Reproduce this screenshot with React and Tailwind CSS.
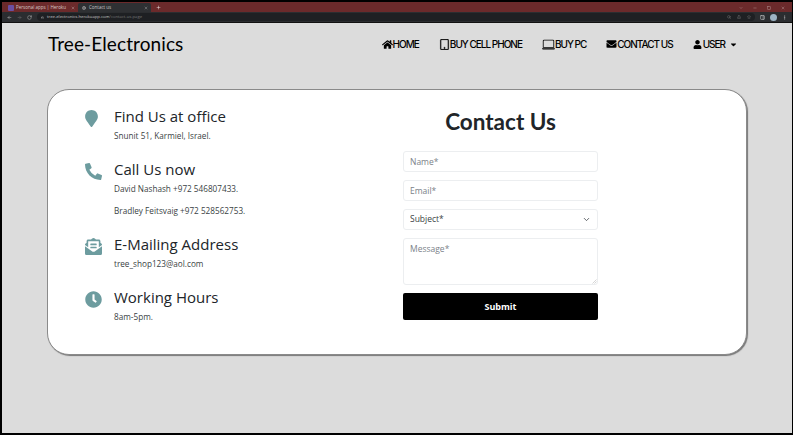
import { FaHome, FaMapMarker, FaPhoneAlt, FaEnvelopeOpenText, FaClock, FaEnvelope, FaUser, FaCaretDown } from 'react-icons/fa'
import { BsTablet, BsLaptop } from 'react-icons/bs'
import { ChevronDown, X, Plus, ArrowLeft, ArrowRight, RotateCw, Lock, Search, Share, Star, Minus, Square, PanelRight, MoreVertical, Globe } from 'lucide-react'

const navItems = [
  { label: 'HOME', icon: <FaHome className="w-[11px] h-[11px]" /> },
  { label: 'BUY CELL PHONE', icon: <BsTablet className="w-[11px] h-[11px] stroke-[0.6px]" /> },
  { label: 'BUY PC', icon: <BsLaptop className="w-[13px] h-[13px]" /> },
  { label: 'CONTACT US', icon: <FaEnvelope className="w-[11px] h-[10px]" /> },
]

const infoBlocks = [
  { title: 'Find Us at office', lines: ['Snunit 51, Karmiel, Israel.'], icon: <FaMapMarker className="w-[17px] h-[17px] -ml-[2px]" /> },
  { title: 'Call Us now', lines: ['David Nashash +972 546807433.', 'Bradley Feitsvaig +972 528562753.'], icon: <FaPhoneAlt className="w-[17px] h-[17px]" /> },
  { title: 'E-Mailing Address', lines: ['tree_shop123@aol.com'], icon: <FaEnvelopeOpenText className="w-[17px] h-[17px]" /> },
  { title: 'Working Hours', lines: ['8am-5pm.'], icon: <FaClock className="w-[17px] h-[17px]" /> },
]

function BrowserChrome() {
  return (
    <>
      {/* Tab strip */}
      <div className="h-[10px] bg-[#6b2a2b] flex items-end pl-[4px] text-[4.5px] leading-none whitespace-nowrap shrink-0">
        <div className="w-[72px] h-[9px] flex items-center gap-[2px] pl-[2px] text-[#d8c8c8]">
          <span className="w-[6px] h-[6px] bg-[#6a4fa3] rounded-[1px]" />
          <span className="flex-1">Personal apps | Heroku</span>
          <X className="w-[4px] h-[4px] mr-[3px]" />
        </div>
        <div className="w-[73px] h-[9px] flex items-center gap-[3px] pl-[4px] bg-[#2e3033] rounded-t-[2px] text-[#c8c8c8]">
          <Globe className="w-[4px] h-[4px]" />
          <span className="flex-1">Contact us</span>
          <X className="w-[4px] h-[4px] mr-[3px]" />
        </div>
        <Plus className="w-[5px] h-[5px] ml-[5px] mb-[2px] text-white" />
        <div className="ml-auto flex items-center gap-[10px] pr-[7px] mb-[2px] text-[#d0b8b8]">
          <ChevronDown className="w-[4px] h-[4px]" />
          <Minus className="w-[4px] h-[4px]" />
          <Square className="w-[4px] h-[4px]" />
          <X className="w-[4px] h-[4px]" />
        </div>
      </div>
      {/* Address bar */}
      <div className="h-[11px] bg-[#2b2d30] flex items-center pl-[5px] pr-[5px] gap-[5px] text-[#c8c8c8] border-b border-[#111] shrink-0">
        <ArrowLeft className="w-[5px] h-[5px]" />
        <ArrowRight className="w-[5px] h-[5px] text-[#777]" />
        <RotateCw className="w-[5px] h-[5px]" />
        <div className="flex-1 h-[8px] bg-[#1e2023] rounded-full flex items-center gap-[3px] pl-[4px] pr-[4px] text-[4.2px] leading-none">
          <Lock className="w-[3px] h-[3px]" />
          <span>tree-electronics.herokuapp.com<span className="text-[#777]">/contact-us-page</span></span>
          <div className="ml-auto flex items-center gap-[6px] text-[#999]">
            <Search className="w-[4px] h-[4px]" />
            <Share className="w-[4px] h-[4px]" />
            <Star className="w-[4px] h-[4px]" />
          </div>
        </div>
        <PanelRight className="w-[5px] h-[5px] text-white" />
        <span className="w-[7px] h-[7px] rounded-full bg-[#9db4c4]" />
        <MoreVertical className="w-[5px] h-[5px]" />
      </div>
    </>
  )
}

function InfoBlock({ block }) {
  return (
    <div className="flex">
      <div className="w-[29px] text-[#6d9c9f] pt-[5px] shrink-0 -ml-[1px]">{block.icon}</div>
      <div>
        <h3 className="text-[15px] leading-[22px] font-normal text-[#212529]">{block.title}</h3>
        <div className="mt-[2px] flex flex-col gap-[7.5px]">
          {block.lines.map((line) => (
            <p key={line} className="text-[8.2px] leading-[14px] text-[#3a3f44]">{line}</p>
          ))}
        </div>
      </div>
    </div>
  )
}

export default function App() {
  const field = 'block w-full h-[21px] px-[6px] bg-white border border-[#eceef0] rounded-[3px] text-[8.5px] text-[#3a3f44] placeholder:text-[#7b8288] outline-none'

  return (
    <div className="w-[793px] h-[435px] flex flex-col overflow-hidden bg-[#dcdcdc] border-2 border-black border-r-[1px] font-['Open_Sans',sans-serif]">
      <BrowserChrome />

      {/* Navbar */}
      <header className="flex items-center justify-between pl-[46px] pr-[54px] h-[42px] shrink-0">
        <span className="text-[19px] text-black font-['Lato',sans-serif] tracking-[0.1px]">Tree-Electronics</span>
        <nav className="flex items-center gap-[20px] text-[10px] font-medium text-black tracking-[-1px] font-['Inter',sans-serif]">
          {navItems.map((item) => (
            <a key={item.label} className="flex items-center">
              {item.icon}
              <span>{item.label}</span>
            </a>
          ))}
          <a className="flex items-center gap-[1px]">
            <FaUser className="w-[9px] h-[9px]" />
            <span>USER</span>
            <FaCaretDown className="w-[9px] h-[9px] ml-[3px]" />
          </a>
        </nav>
      </header>

      {/* Card */}
      <main className="mt-[24px] ml-[45px] w-[700px] h-[266px] bg-white rounded-[22px] border border-[#8a8a8a] shadow-[1px_1px_1px_#777] flex">
        <section className="w-[355px] pl-[38px] pt-[15px] flex flex-col gap-[15px]">
          {infoBlocks.map((block) => (
            <InfoBlock key={block.title} block={block} />
          ))}
        </section>
        <section className="w-[195px] pt-[15px]">
          <h1 className="text-[22.5px] leading-[34px] font-bold text-[#212529] text-center font-['Lato',sans-serif]">Contact Us</h1>
          <form className="mt-[12px] flex flex-col gap-[8px]">
            <input className={field} placeholder="Name*" />
            <input className={field} placeholder="Email*" />
            <div className="relative">
              <select className={`${field} appearance-none`} defaultValue="">
                <option value="">Subject*</option>
              </select>
              <ChevronDown className="absolute right-[7px] top-[6px] w-[9px] h-[9px] text-[#343a40] pointer-events-none" />
            </div>
            <div className="relative">
              <textarea className={`${field} h-[47px] py-[4px] resize-none`} placeholder="Message*" />
              {/* faint resize handle */}
              <svg className="absolute right-[1px] bottom-[1px] w-[5px] h-[5px] text-[#c4c4c4]" viewBox="0 0 5 5" fill="none" stroke="currentColor" strokeWidth="0.7">
                <path d="M0.5 4.5 L4.5 0.5 M2.5 4.5 L4.5 2.5" />
              </svg>
            </div>
            <button type="button" className="h-[27px] bg-black text-white text-[9px] font-bold rounded-[2px]">Submit</button>
          </form>
        </section>
      </main>
    </div>
  )
}
